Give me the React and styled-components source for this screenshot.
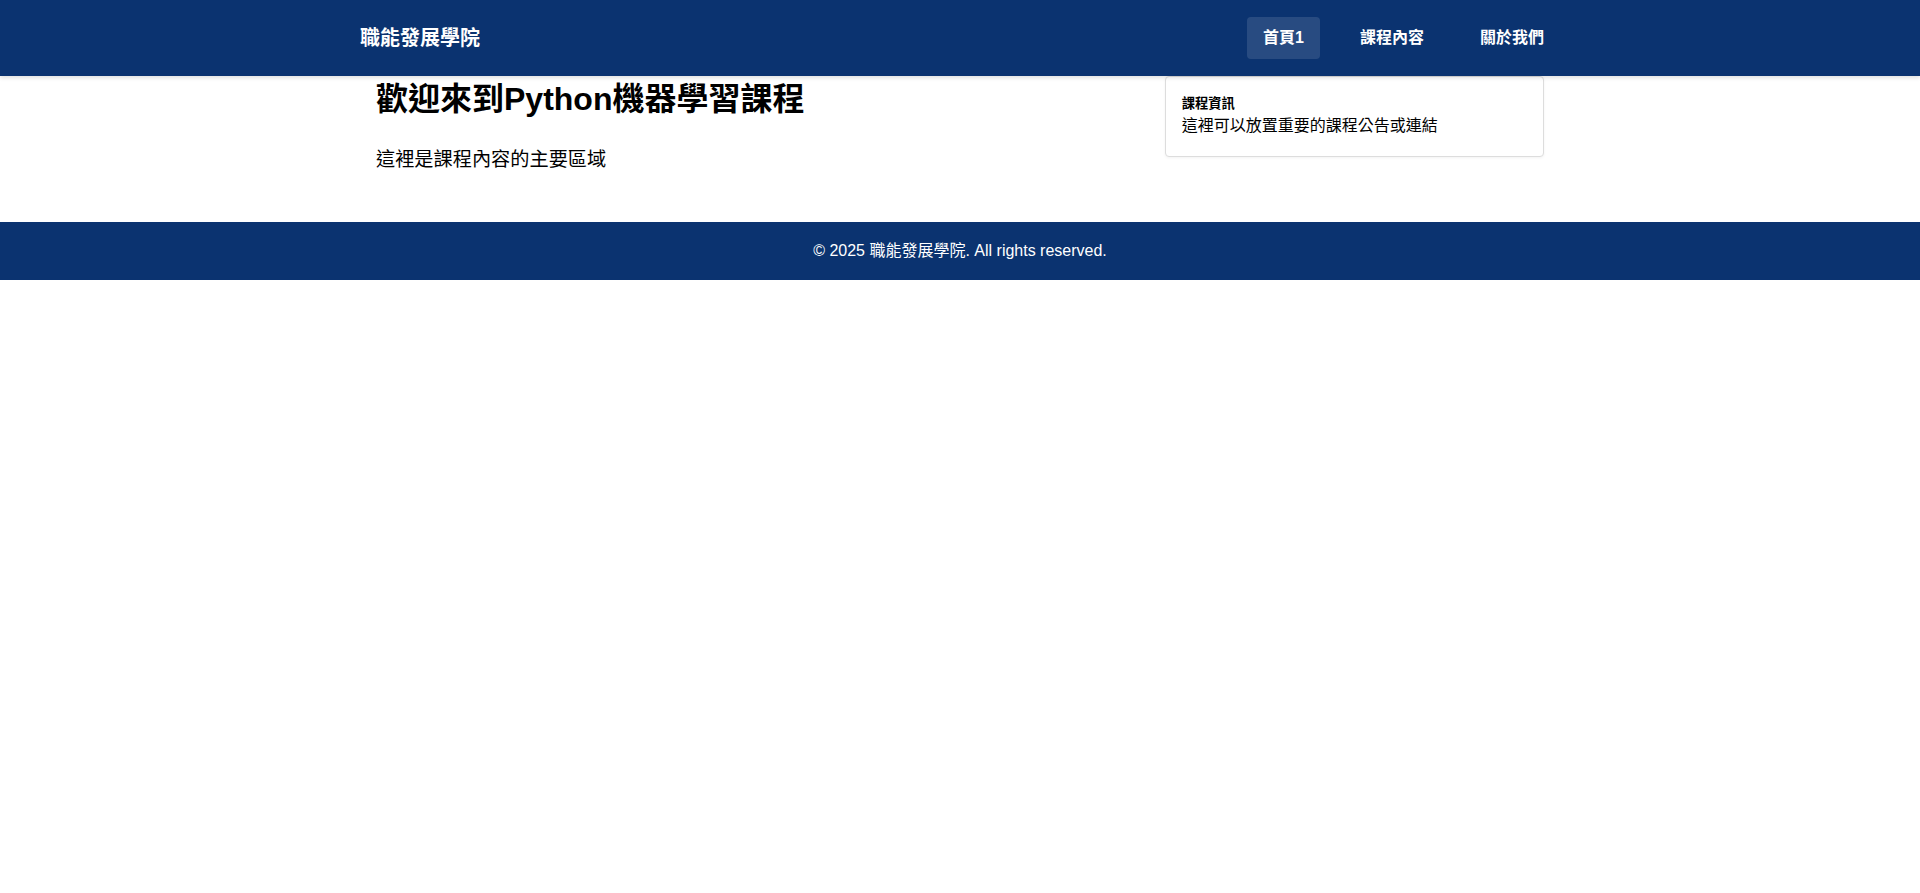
import React from "react";
import styled, { createGlobalStyle } from "styled-components";

const Global = createGlobalStyle`
  html, body { margin: 0; padding: 0; background: #fff; }
  body {
    font-family: "Liberation Sans", Arial, "Noto Sans CJK TC", sans-serif;
    color: #000;
  }
  * { box-sizing: border-box; }
`;

const Header = styled.header`
  background: #0b3370;
  height: 76px;
  box-shadow: 0 2px 4px rgba(0, 0, 0, 0.12);
  position: relative;
  z-index: 1;
`;

const HeaderInner = styled.div`
  max-width: 1200px;
  height: 100%;
  margin: 0 auto;
  display: flex;
  align-items: center;
  justify-content: space-between;
`;

const Logo = styled.div`
  color: #fff;
  font-size: 20px;
  font-weight: bold;
  line-height: 24px;
`;

const Nav = styled.nav`
  display: flex;
  gap: 24px;
`;

const NavLink = styled.a`
  display: block;
  color: #fff;
  font-size: 16px;
  font-weight: bold;
  line-height: 42px;
  height: 42px;
  padding: 0 16px;
  border-radius: 4px;
  text-decoration: none;
  background: ${(p) => (p.$active ? "rgba(255,255,255,0.12)" : "transparent")};
`;

const Main = styled.main`
  max-width: 1200px;
  margin: 0 auto;
  padding: 0 16px 50px;
  display: grid;
  grid-template-columns: 2fr 1fr;
  gap: 30px;
  align-items: start;
`;

const Content = styled.section`
  min-width: 0;
`;

const Title = styled.h1`
  margin: 3px 0 0;
  font-size: 32px;
  line-height: 40px;
  font-weight: bold;
`;

const Lead = styled.p`
  margin: 29px 0 0;
  font-size: 19.2px;
  line-height: 24px;
`;

const Sidebar = styled.aside`
  border: 1px solid #ddd;
  border-radius: 4px;
  padding: 18px 16px 19px;
  background: #fff;
  box-shadow: 0 1px 3px rgba(0, 0, 0, 0.05);
`;

const SideTitle = styled.h5`
  margin: 0;
  font-size: 13.3px;
  font-weight: bold;
  line-height: 18px;
`;

const SideText = styled.p`
  margin: 2px 0 0;
  font-size: 16px;
  line-height: 22px;
`;

const Footer = styled.footer`
  background: #0b3370;
  color: #fff;
  text-align: center;
  font-size: 16px;
  line-height: 19px;
  padding: 19px 0 20px;
`;

export default function App() {
  return (
    <>
      <Global />
      <Header>
        <HeaderInner>
          <Logo>職能發展學院</Logo>
          <Nav>
            <NavLink $active href="#">首頁1</NavLink>
            <NavLink href="#">課程內容</NavLink>
            <NavLink href="#">關於我們</NavLink>
          </Nav>
        </HeaderInner>
      </Header>
      <Main>
        <Content>
          <Title>歡迎來到Python機器學習課程</Title>
          <Lead>這裡是課程內容的主要區域</Lead>
        </Content>
        <Sidebar>
          <SideTitle>課程資訊</SideTitle>
          <SideText>這裡可以放置重要的課程公告或連結</SideText>
        </Sidebar>
      </Main>
      <Footer>© 2025 職能發展學院. All rights reserved.</Footer>
    </>
  );
}
